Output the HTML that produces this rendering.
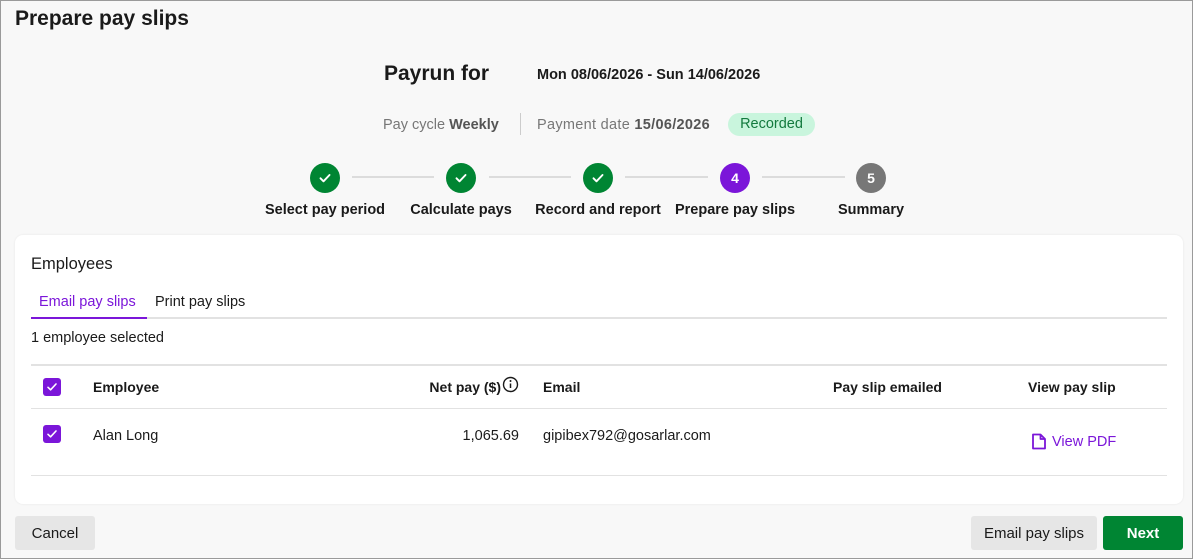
<!DOCTYPE html>
<html><head><meta charset="utf-8"><style>
*{margin:0;padding:0;box-sizing:border-box}
body{width:1193px;height:559px;overflow:hidden;font-family:"Liberation Sans",sans-serif;color:#1a1a1a;background:#f8f8f8;position:relative}
.frame{position:absolute;left:0;top:0;width:1193px;height:559px;box-shadow:inset 0 0 0 1px #9a9a9a;z-index:5;pointer-events:none}
.a{position:absolute;white-space:nowrap}
.circ{position:absolute;width:30px;height:30px;border-radius:50%;color:#fff;font-weight:bold;font-size:14px;display:flex;align-items:center;justify-content:center}
.g{background:#008533}
.line{position:absolute;top:176px;height:2px;background:#dcdcdc}
.lbl{position:absolute;top:202px;font-size:14.5px;font-weight:bold;transform:translateX(-50%);white-space:nowrap}
.card{position:absolute;left:15px;top:235px;width:1168px;height:269px;background:#fff;border-radius:8px;box-shadow:0 0 2px rgba(0,0,0,.08)}
.hr{position:absolute;left:31px;width:1136px;height:1px;background:#e2e2e2}
.cb{position:absolute;width:18px;height:18px;border-radius:3px;background:#7b16d9}
.th{font-weight:bold;font-size:14px}
.btn{position:absolute;top:516px;height:34px;border-radius:3px;font-size:15px;display:flex;align-items:center;justify-content:center}
</style></head><body><div class="frame"></div>
<div class="a" style="left:15px;top:7px;font-size:21px;font-weight:bold">Prepare pay slips</div>
<div class="a" style="left:384px;top:62px;font-size:21px;font-weight:bold">Payrun for</div>
<div class="a" style="left:537px;top:67px;font-size:14.5px;font-weight:bold">Mon 08/06/2026 - Sun 14/06/2026</div>
<div class="a" style="left:383px;top:117px;font-size:14.5px;color:#777">Pay cycle <b style="color:#555">Weekly</b></div>
<div class="a" style="left:520px;top:113px;width:1px;height:22px;background:#ccc"></div>
<div class="a" style="left:537px;top:117px;font-size:14.5px;color:#777;letter-spacing:0.3px">Payment date <b style="color:#555">15/06/2026</b></div>
<div class="a" style="left:728px;top:113px;width:87px;height:23px;border-radius:12px;background:#c9f5dd;color:#137a3e;font-size:14.5px;text-align:center;line-height:23px;padding-top:0">Recorded</div>
<div class="line" style="left:352px;width:82px"></div>
<div class="line" style="left:489px;width:82px"></div>
<div class="line" style="left:625px;width:83px"></div>
<div class="line" style="left:762px;width:83px"></div>
<div class="circ g" style="left:310px;top:163px"><svg width="16" height="16" viewBox="0 0 16 16"><path d="M3.5 8.3l3 3L12.5 5" stroke="#fff" stroke-width="1.9" fill="none" stroke-linecap="round" stroke-linejoin="round"/></svg></div>
<div class="circ g" style="left:446px;top:163px"><svg width="16" height="16" viewBox="0 0 16 16"><path d="M3.5 8.3l3 3L12.5 5" stroke="#fff" stroke-width="1.9" fill="none" stroke-linecap="round" stroke-linejoin="round"/></svg></div>
<div class="circ g" style="left:583px;top:163px"><svg width="16" height="16" viewBox="0 0 16 16"><path d="M3.5 8.3l3 3L12.5 5" stroke="#fff" stroke-width="1.9" fill="none" stroke-linecap="round" stroke-linejoin="round"/></svg></div>
<div class="circ" style="left:720px;top:163px;background:#7b16d9">4</div>
<div class="circ" style="left:856px;top:163px;background:#777">5</div>
<div class="lbl" style="left:325px">Select pay period</div>
<div class="lbl" style="left:461px">Calculate pays</div>
<div class="lbl" style="left:598px">Record and report</div>
<div class="lbl" style="left:735px">Prepare pay slips</div>
<div class="lbl" style="left:871px">Summary</div>
<div class="card"></div>
<div class="a" style="left:31px;top:255px;font-size:16.5px">Employees</div>
<div class="a" style="left:39px;top:294px;font-size:14.5px;color:#7b16d9">Email pay slips</div>
<div class="a" style="left:155px;top:294px;font-size:14.5px">Print pay slips</div>
<div class="a" style="left:31px;top:317px;width:1136px;height:2px;background:#e2e2e2"></div>
<div class="a" style="left:31px;top:317px;width:116px;height:2px;background:#7b16d9"></div>
<div class="a" style="left:31px;top:330px;font-size:14.5px">1 employee selected</div>
<div class="a" style="left:31px;top:364px;width:1136px;height:2px;background:#e2e2e2"></div>
<div class="cb" style="left:43px;top:378px"><svg width="18" height="18" viewBox="0 0 18 18"><path d="M5 9.3l2.6 2.5L13 6" stroke="#fff" stroke-width="1.6" fill="none" stroke-linecap="round" stroke-linejoin="round"/></svg></div>
<div class="a th" style="left:93px;top:379px">Employee</div>
<div class="a th" style="right:692px;top:379px">Net pay ($)</div>
<svg class="a" style="left:502px;top:376px" width="17" height="17" viewBox="0 0 17 17"><circle cx="8.5" cy="8.5" r="7" stroke="#1a1a1a" stroke-width="1.4" fill="none"/><path d="M8.5 7.5v4.5" stroke="#1a1a1a" stroke-width="1.5"/><circle cx="8.5" cy="5" r="1" fill="#1a1a1a"/></svg>
<div class="a th" style="left:543px;top:379px">Email</div>
<div class="a th" style="left:833px;top:379px">Pay slip emailed</div>
<div class="a th" style="left:1028px;top:379px">View pay slip</div>
<div class="hr" style="top:408px"></div>
<div class="cb" style="left:43px;top:425px"><svg width="18" height="18" viewBox="0 0 18 18"><path d="M5 9.3l2.6 2.5L13 6" stroke="#fff" stroke-width="1.6" fill="none" stroke-linecap="round" stroke-linejoin="round"/></svg></div>
<div class="a" style="left:93px;top:428px;font-size:14.5px">Alan Long</div>
<div class="a" style="right:674px;top:428px;font-size:14.5px">1,065.69</div>
<div class="a" style="left:543px;top:428px;font-size:14.5px">gipibex792@gosarlar.com</div>
<svg class="a" style="left:1031px;top:432px" width="16" height="19" viewBox="0 0 16 19"><path d="M2 2.5h7.5l4.5 4.5v9.5h-12z M9.5 2.5v4.5h4.5" stroke="#7b16d9" stroke-width="1.8" fill="none" stroke-linejoin="round"/></svg>
<div class="a" style="left:1052px;top:434px;font-size:14.5px;color:#7b16d9">View PDF</div>
<div class="hr" style="top:475px"></div>
<div class="btn" style="left:15px;width:80px;background:#e6e6e6">Cancel</div>
<div class="btn" style="left:971px;width:126px;background:#e6e6e6">Email pay slips</div>
<div class="btn" style="left:1103px;width:80px;background:#008533;color:#fff;font-weight:bold">Next</div>
</body></html>
